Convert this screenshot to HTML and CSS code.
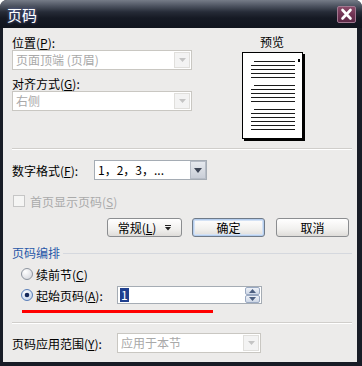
FILE: index.html
```html
<!DOCTYPE html>
<html lang="zh-CN">
<head>
<meta charset="utf-8">
<title>页码</title>
<link rel="stylesheet" href="styles.css">
</head>
<body>
<div class="window">
  <div class="titlebar">
    <span class="title">页码</span>
    <span class="close">
      <svg width="17" height="15" viewBox="0 0 17 15"><path d="M4.5 3 L12.5 11.5 M12.5 3 L4.5 11.5" stroke="#fff" stroke-width="2.6" stroke-linecap="round"/></svg>
    </span>
  </div>
  <div class="client">
    <div class="top">
      <div class="left">
        <div class="lbl">位置(<u>P</u>):</div>
        <div class="select disabled w180"><span class="val">页面顶端 (页眉)</span><span class="arrow"><svg width="7" height="4" viewBox="0 0 7 4"><path d="M0 0 H7 L3.5 4 Z" fill="#c4c4c4"/></svg></span></div>
        <div class="lbl lbl2">对齐方式(<u>G</u>):</div>
        <div class="select disabled w180"><span class="val">右侧</span><span class="arrow"><svg width="7" height="4" viewBox="0 0 7 4"><path d="M0 0 H7 L3.5 4 Z" fill="#c4c4c4"/></svg></span></div>
      </div>
      <div class="preview">
        <div class="ptitle">预览</div>
        <svg class="page" width="63" height="89" viewBox="0 0 63 89">
          <rect x="61" y="2" width="2" height="87" fill="#000"/>
          <rect x="2" y="87" width="61" height="2" fill="#000"/>
          <rect x="0.5" y="0.5" width="60" height="86" fill="#fff" stroke="#000"/>
          <rect x="56" y="7" width="2" height="3" fill="#000"/>
          <g stroke="#1a1a1a" stroke-width="1">
            <path d="M12 9.5 H53 M9 13.5 H53 M9 17.5 H53 M9 21.5 H53 M9 25.5 H53"/>
            <path d="M12 33.5 H53 M9 37.5 H53 M9 41.5 H53 M9 45.5 H53 M9 49.5 H53"/>
            <path d="M12 57.5 H53 M9 61.5 H53 M9 65.5 H53 M9 69.5 H53 M9 73.5 H53 M9 77.5 H53"/>
          </g>
        </svg>
      </div>
    </div>
    <div class="sep sep1"></div>
    <div class="row fmt">
      <span class="rlabel w82">数字格式(<u>F</u>):</span>
      <div class="select enabled w113"><span class="val">1，2，3，...</span><span class="arrow"><svg width="8" height="5" viewBox="0 0 8 5"><path d="M0 0 H8 L4 5 Z" fill="#3e4656"/></svg></span></div>
    </div>
    <div class="row chk">
      <span class="checkbox"></span>
      <span class="dim">首页显示页码(<u>S</u>)</span>
    </div>
    <div class="buttons">
      <button class="btn b1">常规(<u>L</u>)<svg class="dd" width="6" height="6" viewBox="0 0 6 6"><path d="M0 0.5 H6" stroke="#222" stroke-width="1"/><path d="M0 2 H6 L3 5.5 Z" fill="#222"/></svg></button>
      <button class="btn b2 default">确定</button>
      <button class="btn b3">取消</button>
    </div>
    <div class="group">
      <span class="glabel">页码编排</span>
      <span class="gline"></span>
    </div>
    <div class="row radio r1">
      <svg class="rb" width="12" height="12" viewBox="0 0 12 12"><defs><radialGradient id="rg1" cx="0.35" cy="0.3" r="0.8"><stop offset="0" stop-color="#ffffff"/><stop offset="1" stop-color="#d4d6dc"/></radialGradient></defs><circle cx="6" cy="6" r="5.5" fill="url(#rg1)" stroke="#8d949e"/></svg>
      <span class="rtext">续前节(<u>C</u>)</span>
    </div>
    <div class="row radio r2">
      <svg class="rb" width="12" height="12" viewBox="0 0 12 12"><defs><radialGradient id="rg2" cx="0.4" cy="0.35" r="0.8"><stop offset="0" stop-color="#ffffff"/><stop offset="1" stop-color="#b7cbe8"/></radialGradient></defs><circle cx="6" cy="6" r="5.5" fill="url(#rg2)" stroke="#5b7fb8"/><circle cx="6" cy="6" r="2.3" fill="#13275a"/></svg>
      <span class="rtext w81">起始页码(<u>A</u>):</span>
      <div class="spin">
        <span class="sel">1</span>
        <span class="spinbtns">
          <span class="sb"><svg width="7" height="4" viewBox="0 0 7 4"><path d="M0 4 H7 L3.5 0 Z" fill="#4b5e80"/></svg></span>
          <span class="sb"><svg width="7" height="4" viewBox="0 0 7 4"><path d="M0 0 H7 L3.5 4 Z" fill="#4b5e80"/></svg></span>
        </span>
      </div>
    </div>
    <div class="redline"></div>
    <div class="sep sep2"></div>
    <div class="row scope">
      <span class="rlabel w105">页码应用范围(<u>Y</u>):</span>
      <div class="select disabled w144"><span class="val">应用于本节</span><span class="arrow"><svg width="7" height="4" viewBox="0 0 7 4"><path d="M0 0 H7 L3.5 4 Z" fill="#c4c4c4"/></svg></span></div>
    </div>
  </div>
</div>
</body>
</html>
```

FILE: styles.css
```css
* { box-sizing: border-box; }
html, body { margin: 0; padding: 0; }
body {
  width: 362px;
  height: 366px;
  overflow: hidden;
  background: #ffffff;
  font-family: "Noto Sans CJK SC", "Noto Sans", "DejaVu Sans", sans-serif;
  font-size: 12px;
  color: #000;
}
u { text-decoration: underline; text-underline-offset: 1px; }

.window {
  width: 362px;
  height: 366px;
  display: flex;
  flex-direction: column;
  background: #181c26;
  border-radius: 7px 7px 0 0;
  overflow: hidden;
}
.titlebar {
  height: 28px;
  flex: none;
  display: flex;
  align-items: flex-start;
  padding: 0 6px 0 7px;
  background: linear-gradient(#767c88 0px, #4d5360 6px, #262b37 12px, #161a24 18px, #11151e 28px);
}
.title {
  flex: 1;
  color: #fff;
  font-size: 15px;
  line-height: 15px;
  margin-top: 7px;
  text-shadow: 0 0 3px #6a7ac8;
}
.close {
  width: 19px;
  height: 17px;
  margin-top: 6px;
  background: linear-gradient(#8a4a68, #6e3252 55%, #5c2846);
  border: 1px solid #a07890;
  border-radius: 2px;
  display: flex;
}
.close svg { display: block; }

.client {
  flex: 1;
  margin: 0 5px 4px 3px;
  background: #ecebea;
  padding: 7px 5px 0 9px;
}

.top { display: flex; height: 106px; }
.left { width: 180px; }
.lbl { line-height: 15px; height: 15px; }
.lbl2 { margin-top: 6px; }

.select {
  height: 20px;
  display: flex;
  align-items: stretch;
  background: #fff;
  border: 1px solid #c9c7c2;
}
.select .val {
  flex: 1;
  line-height: 18px;
  padding-left: 3px;
  white-space: nowrap;
  overflow: hidden;
}
.select.disabled .val { color: #a9a9a9; }
.select .arrow {
  width: 16px;
  display: flex;
  align-items: center;
  justify-content: center;
  margin: 1px;
  background: #f3f3f3;
  border: 1px solid #e0dfdc;
}
.select.enabled { border-color: #a5acb4; }
.select.enabled .arrow {
  background: linear-gradient(#e6e9ee, #c9ced7);
  border: 1px solid #b6bcc6;
  margin: 0;
}
.w180 { width: 180px; }
.w113 { width: 113px; }
.w144 { width: 144px; }

.preview { margin-left: 50px; width: 63px; }
.ptitle { line-height: 13px; height: 13px; text-align: center; margin-left: -3px; }
.page { display: block; margin-top: 4px; }

.sep {
  height: 2px;
  border-top: 1px solid #d0cecb;
  border-bottom: 1px solid #ffffff;
}
.sep1 { margin-top: 7px; }
.sep2 { margin-top: 9px; }

.row { display: flex; align-items: center; }
.rlabel { white-space: nowrap; }
.w82 { width: 82px; flex: none; }
.w105 { width: 105px; flex: none; }
.w81 { width: 81px; flex: none; }
.fmt { margin-top: 10px; height: 20px; }

.chk { margin-top: 13px; height: 16px; }
.checkbox {
  width: 12px;
  height: 12px;
  margin-left: 1px;
  border: 1px solid #c6c6c6;
  background: #f5f5f4;
}
.dim { color: #aaaaaa; margin-left: 5px; }

.buttons {
  display: flex;
  margin-top: 9px;
  margin-left: 95px;
  height: 19px;
}
.btn {
  height: 19px;
  padding: 0;
  font-family: inherit;
  font-size: 12px;
  color: #000;
  border: 1px solid #8b8d90;
  border-radius: 3px;
  background: linear-gradient(#ffffff, #f1f0ee 60%, #dedcd9);
  display: flex;
  align-items: center;
  justify-content: center;
  line-height: 17px;
}
.b1 { width: 75px; }
.b2 { width: 73px; margin-left: 10px; }
.b3 { width: 73px; margin-left: 11px; }
.btn.default {
  box-shadow: inset 0 0 0 1px #b4cdee, inset 0 0 0 2px #d4e2f5;
  border-color: #6f7a88;
}
.dd { margin-left: 9px; }

.group { display: flex; align-items: center; margin-top: 9px; height: 14px; }
.glabel { color: #2857a8; line-height: 14px; }
.gline { flex: 1; height: 1px; background: #d5d8de; margin-left: 3px; }

.radio { padding-left: 9px; }
.r1 { margin-top: 6px; height: 16px; }
.r2 { margin-top: 4px; height: 18px; }
.rb { display: block; flex: none; }
.rtext { margin-left: 3px; white-space: nowrap; }

.spin {
  width: 145px;
  height: 18px;
  background: #fff;
  border: 1px solid #a5acb4;
  display: flex;
  align-items: center;
  padding-left: 2px;
}
.sel {
  background: #1f3f8f;
  color: #fff;
  line-height: 14px;
  padding: 0 1px;
}
.spinbtns {
  margin-left: auto;
  margin-right: 1px;
  width: 15px;
  height: 16px;
  display: flex;
  flex-direction: column;
}
.sb {
  flex: 1;
  display: flex;
  align-items: center;
  justify-content: center;
  background: linear-gradient(#eef2f8, #cdd7e6);
  border: 1px solid #9aa9c2;
  border-radius: 2px;
}

.redline {
  margin-top: 6px;
  margin-left: 10px;
  width: 191px;
  height: 3px;
  background: #ff0000;
}

.scope { margin-top: 9px; height: 20px; }
```
